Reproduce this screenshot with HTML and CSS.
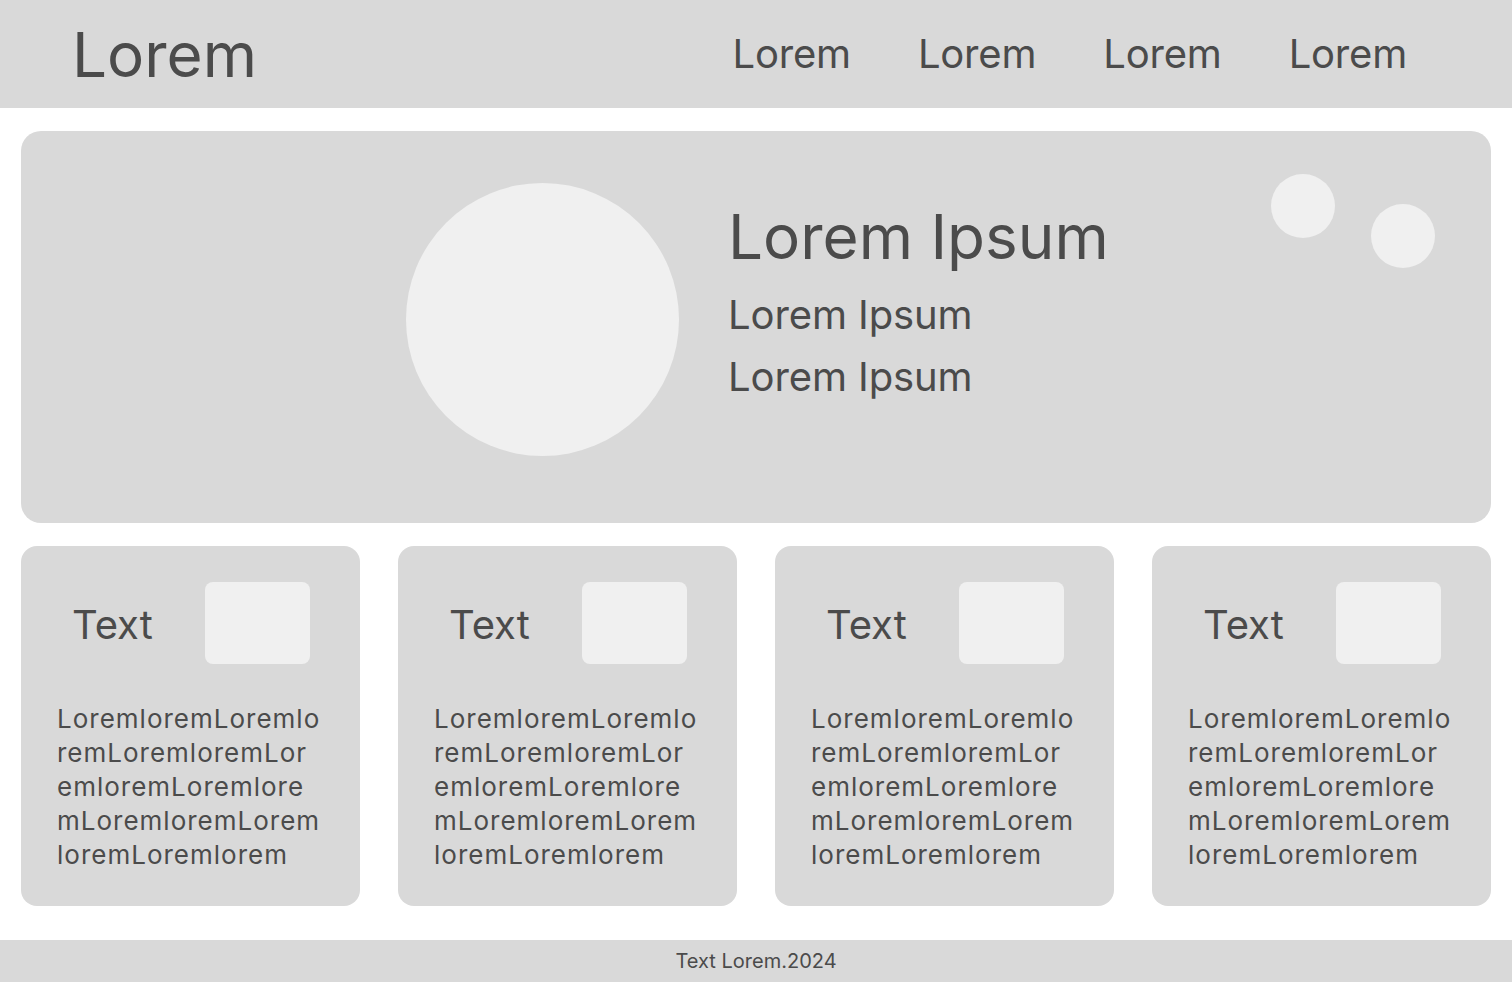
FILE: index.html
```html
<!DOCTYPE html>
<html lang="en">
<head>
<meta charset="utf-8">
<title>Lorem</title>
<link rel="stylesheet" href="styles.css">
</head>
<body>
<header class="topbar">
  <div class="logo">Lorem</div>
  <nav class="nav">
    <a class="nav-link" href="#">Lorem</a>
    <a class="nav-link" href="#">Lorem</a>
    <a class="nav-link" href="#">Lorem</a>
    <a class="nav-link" href="#">Lorem</a>
  </nav>
</header>
<main class="main">
  <section class="hero">
    <div class="hero-avatar"></div>
    <div class="hero-text">
      <h1 class="hero-title">Lorem Ipsum</h1>
      <p class="hero-sub">Lorem Ipsum</p>
      <p class="hero-sub">Lorem Ipsum</p>
    </div>
    <span class="dot dot-one"></span>
    <span class="dot dot-two"></span>
  </section>
  <section class="cards">
    <article class="card">
      <div class="card-head">
        <span class="card-title">Text</span>
        <div class="card-thumb"></div>
      </div>
      <p class="card-body">LoremloremLoremlo<wbr>remLoremloremLor<wbr>emloremLoremlore<wbr>mLoremloremLorem<wbr>loremLoremlorem</p>
    </article>
    <article class="card">
      <div class="card-head">
        <span class="card-title">Text</span>
        <div class="card-thumb"></div>
      </div>
      <p class="card-body">LoremloremLoremlo<wbr>remLoremloremLor<wbr>emloremLoremlore<wbr>mLoremloremLorem<wbr>loremLoremlorem</p>
    </article>
    <article class="card">
      <div class="card-head">
        <span class="card-title">Text</span>
        <div class="card-thumb"></div>
      </div>
      <p class="card-body">LoremloremLoremlo<wbr>remLoremloremLor<wbr>emloremLoremlore<wbr>mLoremloremLorem<wbr>loremLoremlorem</p>
    </article>
    <article class="card">
      <div class="card-head">
        <span class="card-title">Text</span>
        <div class="card-thumb"></div>
      </div>
      <p class="card-body">LoremloremLoremlo<wbr>remLoremloremLor<wbr>emloremLoremlore<wbr>mLoremloremLorem<wbr>loremLoremlorem</p>
    </article>
  </section>
</main>
<footer class="footer">Text Lorem.2024</footer>
</body>
</html>
```
FILE: styles.css
```css
* { box-sizing: border-box; }
html, body { margin: 0; padding: 0; }
body {
  width: 1512px;
  height: 982px;
  background: #ffffff;
  font-family: Inter, "Noto Sans", sans-serif;
  color: #4b4b4b;
  display: flex;
  flex-direction: column;
  overflow: hidden;
}
.topbar {
  height: 108px;
  background: #d9d9d9;
  display: flex;
  align-items: center;
  justify-content: space-between;
  padding: 0 105px 0 72px;
  flex: none;
}
.logo {
  font-size: 62px;
  line-height: 75px;
}
.nav {
  display: flex;
  gap: 67px;
}
.nav-link {
  font-size: 40px;
  line-height: 48px;
  color: #4b4b4b;
  text-decoration: none;
  letter-spacing: -0.2px;
}
.main {
  padding: 23px 21px 34px 21px;
  display: flex;
  flex-direction: column;
  gap: 23px;
  flex: none;
}
.hero {
  position: relative;
  height: 392px;
  background: #d9d9d9;
  border-radius: 20px;
  display: flex;
  align-items: flex-start;
  padding: 52px 0 0 385px;
}
.hero-avatar {
  width: 273px;
  height: 273px;
  border-radius: 50%;
  background: #f0f0f0;
  flex: none;
}
.hero-text {
  margin-left: 49px;
  padding-top: 22px;
}
.hero-title {
  margin: 0;
  font-size: 62px;
  font-weight: 400;
  line-height: 64px;
}
.hero-sub {
  margin: 0;
  font-size: 40px;
  line-height: 62px;
  letter-spacing: -0.1px;
}
.hero-title + .hero-sub { margin-top: 15px; }
.dot {
  position: absolute;
  width: 64px;
  height: 64px;
  border-radius: 50%;
  background: #f0f0f0;
}
.dot-one { left: 1250px; top: 43px; }
.dot-two { left: 1350px; top: 73px; }
.cards {
  display: grid;
  grid-template-columns: repeat(4, 339px);
  gap: 38px;
}
.card {
  height: 360px;
  background: #d9d9d9;
  border-radius: 16px;
  padding: 36px 0 0 0;
}
.card-head {
  display: flex;
  align-items: center;
  padding-left: 51px;
}
.card-title {
  flex: 0 0 133px;
  font-size: 40px;
  line-height: 48px;
  margin-top: 4px;
}
.card-thumb {
  width: 105px;
  height: 82px;
  border-radius: 8px;
  background: #f0f0f0;
}
.card-body {
  margin: 38px 0 0 36px;
  width: 290px;
  font-size: 26px;
  line-height: 34px;
  letter-spacing: 1px;
}
.footer {
  height: 42px;
  background: #d9d9d9;
  display: flex;
  align-items: center;
  justify-content: center;
  font-size: 20px;
  flex: none;
}
```
